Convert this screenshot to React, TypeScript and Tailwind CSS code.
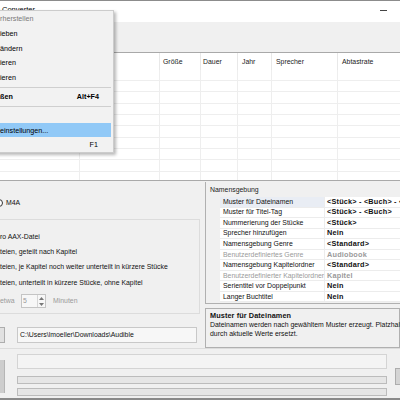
import React from "react";

type Prop = { name: string; value: string; disabled?: boolean; selected?: boolean };

const props: Prop[] = [
  { name: "Muster für Dateinamen", value: "<Stück> - <Buch> - <Autor>", selected: true },
  { name: "Muster für Titel-Tag", value: "<Stück> - <Buch>" },
  { name: "Nummerierung der Stücke", value: "<Stück>" },
  { name: "Sprecher hinzufügen", value: "Nein" },
  { name: "Namensgebung Genre", value: "<Standard>" },
  { name: "Benutzerdefiniertes Genre", value: "Audiobook", disabled: true },
  { name: "Namensgebung Kapitelordner", value: "<Standard>" },
  { name: "Benutzerdefinierter Kapitelordner", value: "Kapitel", disabled: true },
  { name: "Serientitel vor Doppelpunkt", value: "Nein" },
  { name: "Langer Buchtitel", value: "Nein" },
];

function Cut({ prefix, children }: { prefix: string; children?: React.ReactNode }) {
  return (
    <span className="relative whitespace-nowrap">
      <span className="absolute right-full top-0 whitespace-pre">{prefix}</span>
      {children}
    </span>
  );
}

function ListRow({ tall }: { tall: boolean }) {
  return (
    <div className={`flex shrink-0 border-b border-[#eeeeee] ${tall ? "h-[12px]" : "h-[11px]"}`}>
      <div className="w-[80px] shrink-0 border-r border-[#eeeeee]" />
      <div className="w-[80px] shrink-0 border-r border-[#eeeeee]" />
      <div className="w-[41px] shrink-0 border-r border-[#eeeeee]" />
      <div className="w-[37px] shrink-0 border-r border-[#eeeeee]" />
      <div className="w-[34px] shrink-0 border-r border-[#eeeeee]" />
      <div className="w-[66px] shrink-0 border-r border-[#eeeeee]" />
      <div className="flex-1" />
    </div>
  );
}

function MenuItem({
  prefix,
  text,
  shortcut,
  bold,
  disabled,
  active,
  pr,
}: {
  prefix: string;
  text: string;
  shortcut?: string;
  bold?: boolean;
  disabled?: boolean;
  active?: boolean;
  pr: string;
}) {
  return (
    <div
      className={`mr-[2px] flex h-[14.6px] shrink-0 items-center justify-between pl-[9px] ${pr} ${
        active ? "bg-[#91c9f7]" : ""
      } ${bold ? "font-bold" : ""} ${disabled ? "text-[#7a7a7a]" : "text-black"}`}
    >
      <Cut prefix={prefix}>{text}</Cut>
      {shortcut ? <span className="whitespace-nowrap">{shortcut}</span> : null}
    </div>
  );
}

function MenuSep() {
  return (
    <div className="mr-[2px] h-[4.5px] shrink-0 pt-[2px]">
      <div className="h-px bg-[#cfcfcf]" />
    </div>
  );
}

export default function App() {
  const rowTall = [false, false, true, false, false, true, false, false, true, false];
  return (
    <div className="relative h-[400px] w-[400px] overflow-hidden bg-[#f0f0f0] font-['Liberation_Sans',Arial,sans-serif] text-[6.9px] leading-[8px] text-[#111]">
      <div className="h-px bg-[#8c8c8c]" />
      {/* title bar */}
      <div className="flex h-[21px] items-start justify-between bg-white">
        <div className="pl-[2px] pt-[4px] text-[7.5px] leading-[9px] text-black">
          <Cut prefix={"AAX Audio "}>Converter</Cut>
        </div>
        <div className="mr-[13px] mt-[8.5px] h-px w-[7px] bg-[#444]" />
      </div>
      {/* toolbar */}
      <div className="h-[30px] bg-[#f0f0f0]" />
      {/* list view */}
      <div className="flex h-[129px] flex-col overflow-hidden border-y border-[#a9a9a9] bg-white">
        <div className="flex h-[17px] shrink-0 items-center text-[#222]">
          <div className="h-full w-[80px] shrink-0 border-r border-[#e8e8e8]" />
          <div className="h-full w-[80px] shrink-0 border-r border-[#e8e8e8]" />
          <div className="flex h-full w-[41px] shrink-0 items-center border-r border-[#e8e8e8] pl-[3px]">Größe</div>
          <div className="flex h-full w-[37px] shrink-0 items-center border-r border-[#e8e8e8] pl-[2px]">Dauer</div>
          <div className="flex h-full w-[34px] shrink-0 items-center border-r border-[#e8e8e8] pl-[4px]">Jahr</div>
          <div className="flex h-full w-[66px] shrink-0 items-center border-r border-[#e8e8e8] pl-[4px]">Sprecher</div>
          <div className="flex h-full flex-1 items-center pl-[4px] whitespace-nowrap">Abtastrate</div>
        </div>
        {rowTall.map((t, i) => (
          <ListRow key={i} tall={t} />
        ))}
      </div>
      {/* bottom area */}
      <div className="flex h-[167px]">
        {/* left column */}
        <div className="flex w-[200px] shrink-0 flex-col">
          <div className="h-[17px] shrink-0" />
          <div className="flex h-[10px] shrink-0 items-center">
            <div className="ml-[-5px] h-[8px] w-[8px] shrink-0 rounded-full border border-[#333] bg-white" />
            <span className="ml-[3px]">M4A</span>
          </div>
          <div className="h-[11px] shrink-0" />
          <div className="flex h-[95px] shrink-0 flex-col border-y border-r border-[#dcdcdc]">
            <div className="h-[9px] shrink-0" />
            <div className="flex h-[15.33px] shrink-0 items-center">
              <Cut prefix="Eine Datei p">ro AAX-Datei</Cut>
            </div>
            <div className="flex h-[15.33px] shrink-0 items-center">
              <Cut prefix="Mehrere Da">teien, geteilt nach Kapitel</Cut>
            </div>
            <div className="flex h-[15.33px] shrink-0 items-center">
              <Cut prefix="Mehrere Da">teien, je Kapitel noch weiter unterteilt in kürzere Stücke</Cut>
            </div>
            <div className="flex h-[15.33px] shrink-0 items-center">
              <Cut prefix="Mehrere Da">teien, unterteilt in kürzere Stücke, ohne Kapitel</Cut>
            </div>
            <div className="mt-[3.7px] flex h-[14px] shrink-0 items-center text-[#9a9a9a]">
              <span className="w-[21px] shrink-0">etwa</span>
              <div className="flex h-[14px] w-[25px] shrink-0 border border-[#c4c4c4] bg-[#f7f7f7]">
                <div className="flex-1 pl-[1px] leading-[12px]">5</div>
                <div className="flex w-[8px] flex-col border-l border-[#d6d6d6]">
                  <div className="flex flex-1 items-center justify-center">
                    <svg width="5" height="3" viewBox="0 0 5 3">
                      <path d="M0 3 L2.5 0 L5 3Z" fill="#777" />
                    </svg>
                  </div>
                  <div className="flex flex-1 items-center justify-center">
                    <svg width="5" height="3" viewBox="0 0 5 3">
                      <path d="M0 0 L2.5 3 L5 0Z" fill="#777" />
                    </svg>
                  </div>
                </div>
              </div>
              <span className="ml-[7px]">Minuten</span>
            </div>
          </div>
          <div className="h-[13px] shrink-0" />
          <div className="flex h-[16px] shrink-0">
            <div className="ml-[-20px] w-[25px] shrink-0 border border-[#adadad] bg-[#e1e1e1]" />
            <div className="ml-[12px] flex w-[180px] shrink-0 items-center border border-[#c8c8c8] bg-[#f7f7f7] pl-[2px] whitespace-nowrap">
              C:\Users\lmoeller\Downloads\Audible
            </div>
          </div>
        </div>
        {/* right column: property grid */}
        <div className="ml-[5px] flex min-w-0 flex-1 flex-col overflow-hidden">
          <div className="mt-[1px] flex h-[122px] shrink-0 flex-col border-b border-l border-[#b0b0b0]">
            <div className="flex h-[15px] shrink-0 items-center pl-[4px] whitespace-nowrap text-[#222]">Namensgebung</div>
            {props.map((p, i) => (
              <div key={i} className="flex h-[10.56px] shrink-0 whitespace-nowrap">
                <div className="w-[14px] shrink-0 bg-[#f0f0f0]" />
                <div
                  className={`flex w-[105px] shrink-0 items-center border-r border-b border-[#ececec] pl-[3px] ${
                    p.selected ? "bg-[#e9edf4]" : "bg-white"
                  } ${p.disabled ? "text-[#9a9a9a]" : "text-[#111]"}`}
                >
                  {p.name}
                </div>
                <div
                  className={`flex flex-1 items-center border-b border-[#ececec] bg-white pl-[2px] text-[7.3px] font-bold tracking-[0.2px] ${
                    p.disabled ? "text-[#9a9a9a]" : "text-[#111]"
                  }`}
                >
                  {p.value}
                </div>
              </div>
            ))}
          </div>
          <div className="h-[4px] shrink-0" />
          <div className="flex h-[40px] shrink-0 flex-col border border-[#b0b0b0] bg-[#f0f0f0] pl-[4px] pt-[2px] whitespace-nowrap">
            <div className="h-[9px] text-[7.3px] font-bold leading-[9px] tracking-[0.1px]">Muster für Dateinamen</div>
            <div className="h-[9px] leading-[9px]">Dateinamen werden nach gewähltem Muster erzeugt. Platzhalter werden</div>
            <div className="h-[9px] leading-[9px]">durch aktuelle Werte ersetzt.</div>
          </div>
        </div>
      </div>
      <div className="h-px bg-[#dcdcdc]" />
      {/* progress section */}
      <div className="flex h-[49px] items-start">
        <div className="mt-[11px] h-[33px] w-[5px] shrink-0 border-r border-[#b5b5b5] bg-[#cdcdcd]" />
        <div className="ml-[12px] flex w-[370px] shrink-0 flex-col pt-[5px]">
          <div className="h-[15px] border border-[#d4d4d4] bg-[#f4f4f4]" />
          <div className="mt-[7px] h-[8px] border border-[#bcbcbc] bg-[#e6e6e6]" />
          <div className="mt-[4px] h-[8px] border border-[#bcbcbc] bg-[#e6e6e6]" />
        </div>
        <div className="ml-[8px] mt-[19px] h-[17px] w-[5px] shrink-0 border-y border-l border-[#adadad] bg-[#d4d4d4]" />
      </div>
      <div className="h-[2px] bg-[#8a8a8a]" />

      {/* system menu overlay */}
      <div className="absolute left-[-10px] top-[10px] flex h-[143px] w-[124px] flex-col border border-[#cccccc] bg-[#f2f2f2] pt-[0.7px] text-[7.2px] leading-[9px] shadow-[2px_2px_3px_rgba(0,0,0,0.28)]">
        <MenuItem prefix="Wiede" text="rherstellen" disabled pr="pr-[12px]" />
        <MenuItem prefix="Versch" text="ieben" pr="pr-[12px]" />
        <MenuItem prefix="Größe " text="ändern" pr="pr-[12px]" />
        <MenuItem prefix="Minim" text="ieren" pr="pr-[12px]" />
        <MenuItem prefix="Maxim" text="ieren" pr="pr-[12px]" />
        <MenuSep />
        <MenuItem prefix="Schlie" text="ßen" shortcut="Alt+F4" bold pr="pr-[12px]" />
        <MenuSep />
        <MenuItem prefix="Info über AAX Audio Converter..." text="" pr="pr-[12px]" />
        <MenuItem prefix="Grund" text="einstellungen..." active pr="pr-[12px]" />
        <MenuItem prefix="Hilfe" text="" shortcut="F1" pr="pr-[13px]" />
      </div>
    </div>
  );
}
